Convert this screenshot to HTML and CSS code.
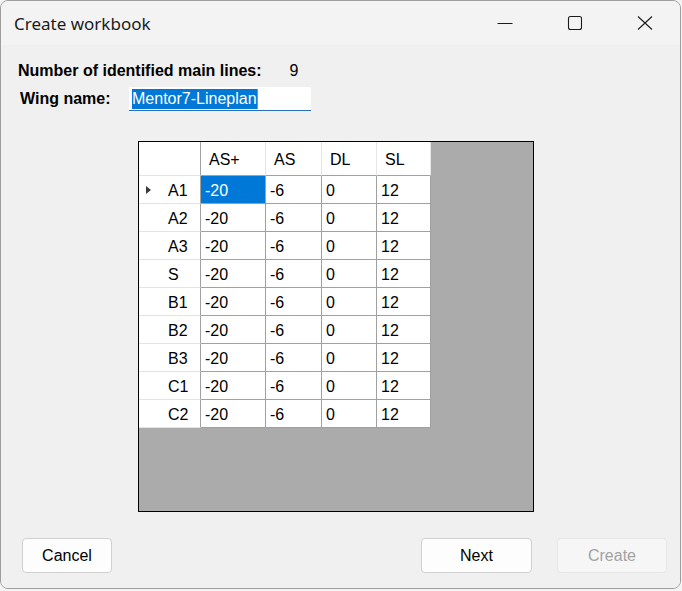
FILE: index.html
```html
<!DOCTYPE html>
<html>
<head>
<meta charset="utf-8">
<link rel="stylesheet" href="styles.css">
</head>
<body>
<div class="window">
  <div class="titlebar">
    <div class="title">Create workbook</div>
    <div class="caption">
      <div class="cbtn"><svg width="16" height="16" viewBox="0 0 16 16"><path d="M0.5 8.5H15.5" stroke="#1b1b1b" stroke-width="1" fill="none"/></svg></div>
      <div class="cbtn"><svg width="16" height="16" viewBox="0 0 16 16"><rect x="1.5" y="1.5" width="13" height="13" rx="2" stroke="#1b1b1b" stroke-width="1.1" fill="none"/></svg></div>
      <div class="cbtn"><svg width="16" height="16" viewBox="0 0 16 16"><path d="M1 1.5L15 14.5M15 1.5L1 14.5" stroke="#1b1b1b" stroke-width="1.1" fill="none"/></svg></div>
    </div>
  </div>
  <div class="content">
    <div class="row1">
      <span class="lbl">Number of identified main lines:</span>
      <span class="val">9</span>
    </div>
    <div class="row2">
      <span class="lbl lbl-wing">Wing name:</span>
      <span class="textbox"><span class="sel">Mentor7-Lineplan</span><span class="caret"></span></span>
    </div>
    <div class="gridbox">
      <div class="grid">
        <div class="hc corner"></div>
        <div class="hc">AS+</div>
        <div class="hc">AS</div>
        <div class="hc">DL</div>
        <div class="hc">SL</div>

        <div class="rh"><span class="arrow"></span>A1</div>
        <div class="dc selected">-20</div><div class="dc">-6</div><div class="dc">0</div><div class="dc">12</div>

        <div class="rh">A2</div>
        <div class="dc">-20</div><div class="dc">-6</div><div class="dc">0</div><div class="dc">12</div>

        <div class="rh">A3</div>
        <div class="dc">-20</div><div class="dc">-6</div><div class="dc">0</div><div class="dc">12</div>

        <div class="rh">S</div>
        <div class="dc">-20</div><div class="dc">-6</div><div class="dc">0</div><div class="dc">12</div>

        <div class="rh">B1</div>
        <div class="dc">-20</div><div class="dc">-6</div><div class="dc">0</div><div class="dc">12</div>

        <div class="rh">B2</div>
        <div class="dc">-20</div><div class="dc">-6</div><div class="dc">0</div><div class="dc">12</div>

        <div class="rh">B3</div>
        <div class="dc">-20</div><div class="dc">-6</div><div class="dc">0</div><div class="dc">12</div>

        <div class="rh">C1</div>
        <div class="dc">-20</div><div class="dc">-6</div><div class="dc">0</div><div class="dc">12</div>

        <div class="rh">C2</div>
        <div class="dc">-20</div><div class="dc">-6</div><div class="dc">0</div><div class="dc">12</div>
      </div>
    </div>
    <div class="buttons">
      <div class="btn btn-cancel">Cancel</div>
      <div class="btn btn-next">Next</div>
      <div class="btn btn-create disabled">Create</div>
    </div>
  </div>
</div>
</body>
</html>
```

FILE: styles.css
```css
* { box-sizing: border-box; }
html, body { margin: 0; padding: 0; }
body {
  background: #f4f4f4;
  width: 682px;
  height: 591px;
  overflow: hidden;
}
.window {
  width: 681px;
  height: 589px;
  border: 1px solid #9d9d9d;
  border-radius: 8px;
  overflow: hidden;
  display: flex;
  flex-direction: column;
  background: #f0f0f0;
}
.titlebar {
  height: 44px;
  background: #f3f3f3;
  display: flex;
  align-items: center;
  flex: none;
}
.title {
  font-family: "Noto Sans", sans-serif;
  font-size: 17px;
  color: #1b1b1b;
  padding-left: 13px;
  flex: 1;
  margin-top: 1px;
}
.caption {
  display: flex;
  align-items: center;
  height: 100%;
}
.cbtn {
  width: 70px;
  height: 100%;
  display: flex;
  align-items: center;
  justify-content: center;
}
.cbtn svg { display: block; margin-top: -1px; }

.content {
  flex: 1;
  background: #f0f0f0;
  display: flex;
  flex-direction: column;
  font-family: "Liberation Sans", Arial, sans-serif;
  color: #000;
  padding-top: 17px;
}
.row1 {
  display: flex;
  align-items: baseline;
  padding-left: 17px;
  font-size: 16px;
  line-height: 18px;
}
.lbl { font-weight: bold; }
.val { margin-left: 28px; }
.row2 {
  display: flex;
  align-items: baseline;
  padding-left: 19px;
  margin-top: 7px;
  font-size: 16px;
}
.lbl-wing { width: 109px; }
.textbox {
  display: inline-flex;
  align-items: center;
  width: 182px;
  height: 24px;
  background: #fff;
  border-bottom: 1px solid #2a6fba;
  padding-left: 3px;
  padding-top: 1px;
}
.sel {
  display: inline-block;
  background: #0078d7;
  color: #fff;
  height: 20px;
  line-height: 20px;
}
.caret {
  display: inline-block;
  width: 1px;
  height: 20px;
  background: #e07a1f;
}

.gridbox {
  margin-top: 30px;
  margin-left: 137px;
  width: 396px;
  height: 371px;
  border: 1px solid #000;
  background: #ababab;
}
.grid {
  display: grid;
  grid-template-columns: 62px 65px 56px 55px 54px;
  grid-template-rows: 34px repeat(9, 28px);
  width: 292px;
  font-size: 16px;
  line-height: 18px;
}
.hc, .rh, .dc {
  background: #fff;
  display: flex;
  align-items: center;
  white-space: nowrap;
}
.hc {
  border-right: 1px solid #e6e6e6;
  border-bottom: 1px solid #a0a0a0;
  padding-left: 8px;
  padding-top: 3px;
}
.hc.corner {
  border-right: 1px solid #a0a0a0;
  border-bottom: 1px solid #e3e3e3;
}
.rh {
  border-right: 1px solid #a0a0a0;
  border-bottom: 1px solid #e3e3e3;
  padding-left: 29px;
  padding-top: 2px;
  position: relative;
}
.dc {
  border-right: 1px solid #a0a0a0;
  border-bottom: 1px solid #a0a0a0;
  padding-left: 4px;
  padding-top: 2px;
}
.dc.selected {
  background: #0078d7;
  color: #fff;
}
.arrow {
  position: absolute;
  left: 7px;
  top: 10px;
  width: 0;
  height: 0;
  border-top: 4.5px solid transparent;
  border-bottom: 4.5px solid transparent;
  border-left: 5px solid #3a3a3a;
}

.buttons {
  display: flex;
  margin-top: 26px;
  padding-left: 21px;
  padding-right: 13px;
}
.btn {
  height: 35px;
  display: flex;
  align-items: center;
  justify-content: center;
  background: #fdfdfd;
  border: 1px solid #d0d0d0;
  border-radius: 4px;
  font-size: 16px;
  color: #000;
}
.btn-cancel { width: 90px; }
.btn-next { width: 111px; margin-left: auto; }
.btn-create { width: 110px; margin-left: 25px; }
.btn.disabled {
  background: #f6f6f6;
  border-color: #e6e6e6;
  color: #a2a2a2;
}
```
